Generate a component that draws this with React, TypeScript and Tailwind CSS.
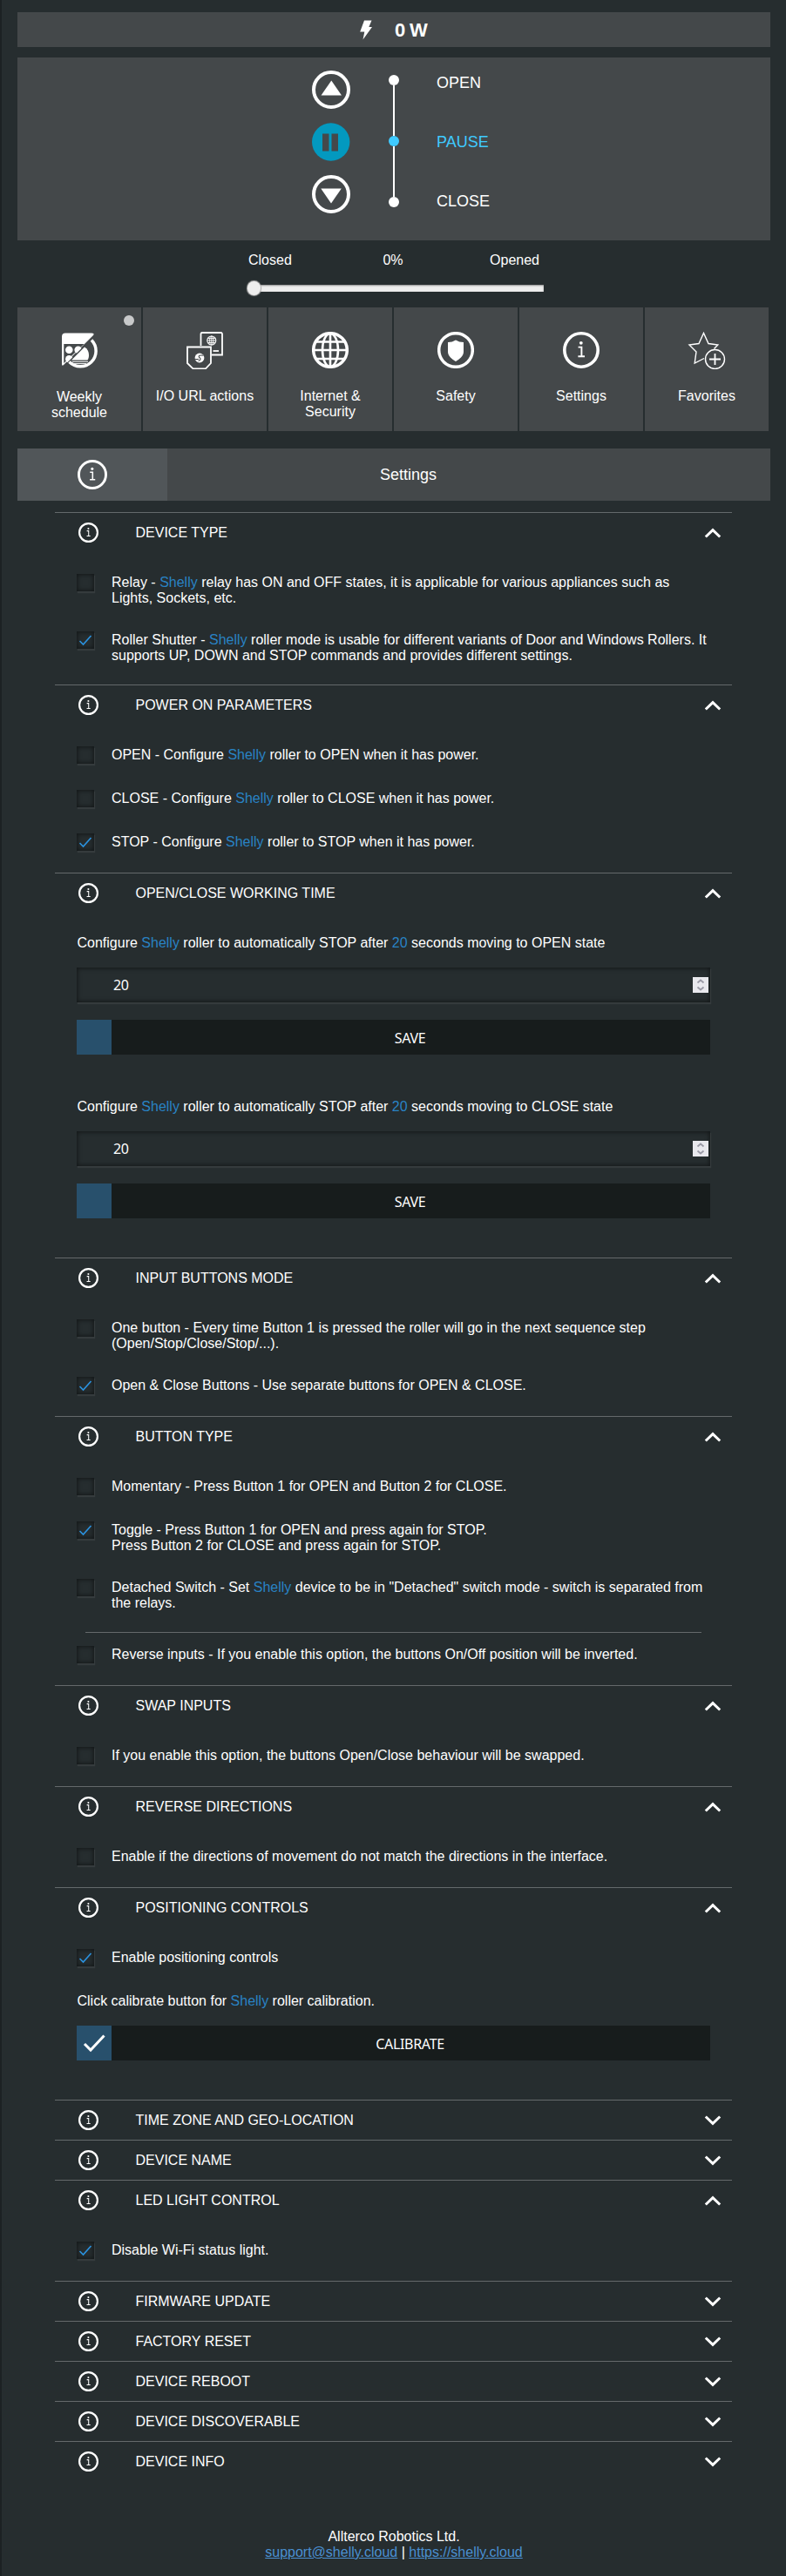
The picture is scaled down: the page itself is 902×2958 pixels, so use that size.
import type { ReactNode } from "react";

const INSET =
  "bg-[#262d2f] shadow-[inset_0_0_5px_1px_rgba(0,0,0,0.5),1px_2px_1px_rgba(255,255,255,0.07)]";

function InfoIcon({ size, stroke }: { size: number; stroke: number }) {
  return (
    <svg width={size} height={size} viewBox="0 0 42 42" fill="none" stroke="#fff">
      <circle cx="21" cy="21" r={21 - stroke / 2} strokeWidth={stroke} />
      <circle cx="20.8" cy="12.8" r="1.9" fill="#fff" stroke="none" />
      <path d="M17.6 17.6H21.4V28M17.4 28.2H25" strokeWidth="1.9" />
    </svg>
  );
}

function WeeklyIcon() {
  return (
    <svg width="44" height="44" viewBox="0 0 44 44" fill="#fff">
      <path d="M6 2.500H36Q40 2.500 38 5L4 39Q2 41 2 38V6.500Q2 2.500 6 2.500ZM4.300 15V37L27.500 15Z" fillRule="evenodd" />
      <circle cx="10.300" cy="21.700" r="4.300" />
      <circle cx="20.700" cy="21.700" r="4.300" />
      <circle cx="10.300" cy="32.300" r="4.300" />
      <path d="M40 4.500L3 41.500L20 44L44 44V4Z" fill="#44484a" />
      <path d="M36 10.500A17 17 0 1 1 10.500 35.500" fill="none" stroke="#fff" strokeWidth="3.5" />
      <path d="M13 33.500L28 18.500C31.500 20.500 33 24 33 27.500C33 30 32.500 32 31.500 33.500Z" />
      <path d="M14 35.300H32M15.500 37.600H30" stroke="#fff" strokeWidth="1" />
    </svg>
  );
}

function ActionsIcon() {
  return (
    <svg width="44" height="44" viewBox="0 0 44 44" fill="none" stroke="#fff" strokeWidth="1.8">
      <path d="M17.500 17V3.500Q17.500 2 19 2H40.500Q42 2 42 3.500V27.500H30" />
      <circle cx="29.800" cy="11" r="5" strokeWidth="1.1" />
      <ellipse cx="29.800" cy="11" rx="2.200" ry="5" strokeWidth="0.9" />
      <path d="M29.800 6V16M24.800 11H34.800M25.500 8.500H34M25.500 13.500H34" strokeWidth="0.9" />
      <path d="M31.500 23H38" />
      <path d="M2 18.500H29V37L23 43.300H8.500L2 37Z" />
      <circle cx="16" cy="31" r="5.400" fill="#fff" stroke="none" />
      <path d="M20.500 28.300C16.500 27.500 14.300 28.500 15.500 30.300C17.500 31.500 18 33.500 14.500 34.500M10.500 32.300C12.500 32.800 14 32.700 15 32.200" stroke="#44484a" strokeWidth="1.1" />
    </svg>
  );
}

function GlobeIcon() {
  return (
    <svg width="42" height="42" viewBox="0 0 42 42" fill="none" stroke="#fff" strokeWidth="2.6">
      <circle cx="21" cy="21" r="19.300" strokeWidth="3.5" />
      <ellipse cx="21" cy="21" rx="9" ry="19" />
      <path d="M21 2V40M2 21H40M5 11.500H37M5 31H37" />
    </svg>
  );
}

function SafetyIcon() {
  return (
    <svg width="42" height="42" viewBox="0 0 42 42" fill="none">
      <circle cx="21" cy="21" r="19.300" stroke="#fff" strokeWidth="3.5" />
      <path d="M21 9.500Q25 12 30 12V23C30 28 25 31.500 21 34C17 31.500 12 28 12 23V12Q17 12 21 9.500Z" fill="#fff" />
    </svg>
  );
}

function FavoritesIcon() {
  return (
    <svg width="44" height="44" viewBox="0 0 44 44" fill="none" stroke="#fff" strokeWidth="1.4">
      <path d="M30.500 20.500L34.800 16L24 14.500L18.500 2.500L13 14.500L2 16L10 24L8.200 37L19 31.500" />
      <circle cx="31.500" cy="32.500" r="11" />
      <path d="M31.500 26V39M25 32.500H38" strokeWidth="1.800" />
    </svg>
  );
}

function Chevron({ open }: { open?: boolean }) {
  return (
    <svg width="20" height="12" viewBox="0 0 20 12" fill="none" stroke="#fff" strokeWidth="3">
      <path d={open ? "M1.800 10.500L10 2.600L18.200 10.500" : "M1.800 1.500L10 9.400L18.200 1.500"} />
    </svg>
  );
}

const Blue = ({ children }: { children: ReactNode }) => (
  <span className="text-[#2983c5]">{children}</span>
);
const S = () => <Blue>Shelly</Blue>;

function Option({ checked, children }: { checked?: boolean; children: ReactNode }) {
  return (
    <label className="my-[15px] flex items-start pl-[25px]">
      <span className={`flex h-5 w-5 shrink-0 items-center justify-center ${INSET}`}>
        {checked && (
          <svg width="16" height="14" viewBox="0 0 16 14" fill="none" stroke="#2b93e0" strokeWidth="1.6">
            <path d="M1.500 8L5.500 12L14.500 2" />
          </svg>
        )}
      </span>
      <span className="-mb-px ml-5 w-[690px] pt-px leading-[18px]">{children}</span>
    </label>
  );
}

function Section({ title, children }: { title: string; children?: ReactNode }) {
  return (
    <section className="border-t border-[#64696b]">
      <div className="flex h-[45px] items-center pr-3 pl-[27px]">
        <InfoIcon size={23} stroke={4} />
        <h2 className="ml-[42.5px] grow">{title}</h2>
        <Chevron open={!!children} />
      </div>
      {children && <div className="flow-root py-[10px]">
        <div className="flex flex-col">{children}</div>
      </div>}
    </section>
  );
}

function Action({ label, check }: { label: string; check?: boolean }) {
  return (
    <button className="mt-5 ml-[25px] flex h-10 w-[727px] bg-[#171c1c] font-['Noto_Sans',sans-serif] text-base tracking-[-0.3px]">
      <span className="flex h-10 w-10 items-center justify-center bg-[#28506c]">
        {check && (
          <svg width="26" height="22" viewBox="0 0 26 22" fill="none" stroke="#fff" strokeWidth="3">
            <path d="M2 12L9 19L24.500 2.500" />
          </svg>
        )}
      </span>
      <span className="grow pt-px pr-[2px] text-center leading-10">{label}</span>
    </button>
  );
}

function TimeForm({ target }: { target: string }) {
  return (
    <div className="mt-[15px] mb-[35px]">
      <p className="-mb-px ml-[25.5px] pt-px leading-[18px]">
        Configure <S /> roller to automatically STOP after <Blue>20</Blue> seconds moving to {target} state
      </p>
      <div className={`mt-5 ml-[25px] flex h-10 w-[727px] items-center justify-between pr-[2px] pl-[42px] font-['Noto_Sans',sans-serif] text-base tracking-[-0.3px] ${INSET}`}>
        <span>20</span>
        <svg width="18" height="18" viewBox="0 0 18 18" className="bg-[#e9e9ee]" fill="none" stroke="#9a9aa6" strokeWidth="1.8">
          <path d="M5.500 6.500L9 3.500L12.500 6.500M5.500 11.500L9 14.500L12.500 11.500" />
        </svg>
      </div>
      <Action label="SAVE" />
    </div>
  );
}

const tiles: { label: ReactNode; icon: ReactNode; dot?: boolean }[] = [
  { label: <>Weekly<br />schedule</>, icon: <WeeklyIcon />, dot: true },
  { label: "I/O URL actions", icon: <ActionsIcon /> },
  { label: <>Internet &amp;<br />Security</>, icon: <GlobeIcon /> },
  { label: "Safety", icon: <SafetyIcon /> },
  { label: "Settings", icon: <InfoIcon size={42} stroke={3.6} /> },
  { label: "Favorites", icon: <FavoritesIcon /> },
];

export default function App() {
  return (
    <div className="h-[2958px] w-[902px] border-l-2 border-[#1c2123] bg-[#262d2f] pt-[14px] pr-[18px] pl-[18px] font-['Liberation_Sans',Arial,sans-serif] text-base text-white">
      <div className="flex h-10 items-center bg-[#44484a] pl-[392px]">
        <svg width="16" height="23" viewBox="0 0 16 23" fill="#fff">
          <path d="M6 0.500H14.500L11.300 8H15L4.500 22.500L6.300 13.500H1.200Z" />
        </svg>
        <span className="ml-[25px] text-[22px] font-bold tracking-[-0.7px]">0 W</span>
      </div>

      <div className="mt-3 flex h-[210px] bg-[#44484a] pl-[338px]">
        <div className="flex flex-col gap-4 pt-[15px]">
          <svg width="44" height="44" viewBox="0 0 44 44" fill="#fff">
            <circle cx="22" cy="22" r="20" fill="none" stroke="#fff" strokeWidth="4" />
            <path d="M22.300 11.500L34 28.500H10.500Z" />
          </svg>
          <svg width="44" height="44" viewBox="0 0 44 44">
            <circle cx="21.700" cy="22" r="21.700" fill="#0399bf" />
            <path d="M12 12.500H19.500V32.500H12ZM22.500 12.500H30V32.500H22.500Z" fill="#44484a" />
          </svg>
          <svg width="44" height="44" viewBox="0 0 44 44" fill="#fff">
            <circle cx="22" cy="22" r="20" fill="none" stroke="#fff" strokeWidth="4" />
            <path d="M22 32.500L10.300 15.500H33.800Z" />
          </svg>
        </div>
        <div className="ml-11 flex flex-col items-center pt-5">
          <i className="h-3 w-3 rounded-full bg-white" />
          <i className="h-[58px] w-[2px] bg-white" />
          <i className="h-3 w-3 rounded-full bg-[#3fcaff]" />
          <i className="h-[58px] w-[2px] bg-white" />
          <i className="h-3 w-3 rounded-full bg-white" />
        </div>
        <div className="ml-[43px] flex flex-col gap-12 pt-[19px] text-lg leading-5">
          <span>OPEN</span>
          <span className="text-[#3fcaff]">PAUSE</span>
          <span>CLOSE</span>
        </div>
      </div>

      <div className="mt-[13px] ml-[265px] flex h-5 w-[334px] justify-between leading-5">
        <span>Closed</span>
        <span className="ml-[5px]">0%</span>
        <span>Opened</span>
      </div>
      <div className="mt-[14px] ml-[264px] flex h-4 w-[340px] items-center">
        <i className="z-10 h-4 w-[15px] shrink-0 rounded-full bg-[#eeeeee] shadow-[0_0_1px_1px_#aaaaaa]" />
        <i className="-ml-1 h-2 grow bg-[#eeeeee] shadow-[inset_0_1px_2px_#888888]" />
      </div>

      <div className="mt-[14px] flex gap-[2px]">
        {tiles.map((t, i) => (
          <div key={i} className="relative flex h-[142px] w-[142px] flex-col items-center bg-[#44484a] pt-[27px] text-center">
            {t.dot && <i className="absolute top-[9px] right-2 h-3 w-3 rounded-full bg-[#c8c9ca]" />}
            <div className="flex h-11 items-center">{t.icon}</div>
            <div className={t.dot ? "mt-[23px] leading-[18px]" : "mt-[22px] leading-[18px]"}>{t.label}</div>
          </div>
        ))}
      </div>

      <div className="mt-5 flex h-[60px] w-[864px] bg-[#44484a]">
        <div className="flex w-[172px] items-center justify-center bg-[#515659]">
          <InfoIcon size={34} stroke={3.6} />
        </div>
        <div className="w-[553px] text-center text-lg leading-[60px]">Settings</div>
      </div>

      <main className="mt-[13px] ml-[43px] w-[777px]">
        <Section title="DEVICE TYPE">
          <Option>Relay - <S /> relay has ON and OFF states, it is applicable for various appliances such as<br />Lights, Sockets, etc.</Option>
          <Option checked>Roller Shutter - <S /> roller mode is usable for different variants of Door and Windows Rollers. It<br />supports UP, DOWN and STOP commands and provides different settings.</Option>
        </Section>
        <Section title="POWER ON PARAMETERS">
          <Option>OPEN - Configure <S /> roller to OPEN when it has power.</Option>
          <Option>CLOSE - Configure <S /> roller to CLOSE when it has power.</Option>
          <Option checked>STOP - Configure <S /> roller to STOP when it has power.</Option>
        </Section>
        <Section title="OPEN/CLOSE WORKING TIME">
          <TimeForm target="OPEN" />
          <TimeForm target="CLOSE" />
        </Section>
        <Section title="INPUT BUTTONS MODE">
          <Option>One button - Every time Button 1 is pressed the roller will go in the next sequence step<br />(Open/Stop/Close/Stop/...).</Option>
          <Option checked>Open &amp; Close Buttons - Use separate buttons for OPEN &amp; CLOSE.</Option>
        </Section>
        <Section title="BUTTON TYPE">
          <Option>Momentary - Press Button 1 for OPEN and Button 2 for CLOSE.</Option>
          <Option checked>Toggle - Press Button 1 for OPEN and press again for STOP.<br />Press Button 2 for CLOSE and press again for STOP.</Option>
          <Option>Detached Switch - Set <S /> device to be in "Detached" switch mode - switch is separated from<br />the relays.</Option>
          <hr className="mt-[10px] ml-[35px] w-[707px] border-[#64696b]" />
          <Option>Reverse inputs - If you enable this option, the buttons On/Off position will be inverted.</Option>
        </Section>
        <Section title="SWAP INPUTS">
          <Option>If you enable this option, the buttons Open/Close behaviour will be swapped.</Option>
        </Section>
        <Section title="REVERSE DIRECTIONS">
          <Option>Enable if the directions of movement do not match the directions in the interface.</Option>
        </Section>
        <Section title="POSITIONING CONTROLS">
          <Option checked>Enable positioning controls</Option>
          <p className="mt-4 -mb-px ml-[25.5px] leading-[18px]">Click calibrate button for <S /> roller calibration.</p>
          <Action label="CALIBRATE" check />
          <div className="h-[35px]" />
        </Section>
        <Section title="TIME ZONE AND GEO-LOCATION" />
        <Section title="DEVICE NAME" />
        <Section title="LED LIGHT CONTROL">
          <Option checked>Disable Wi-Fi status light.</Option>
        </Section>
        <Section title="FIRMWARE UPDATE" />
        <Section title="FACTORY RESET" />
        <Section title="DEVICE REBOOT" />
        <Section title="DEVICE DISCOVERABLE" />
        <Section title="DEVICE INFO" />
      </main>

      <footer className="mt-[55px] text-center leading-[18px]">
        <div>Allterco Robotics Ltd.</div>
        <div>
          <a className="text-[#4a90d2] underline">support@shelly.cloud</a> | <a className="text-[#4a90d2] underline">https://shelly.cloud</a>
        </div>
      </footer>
    </div>
  );
}
